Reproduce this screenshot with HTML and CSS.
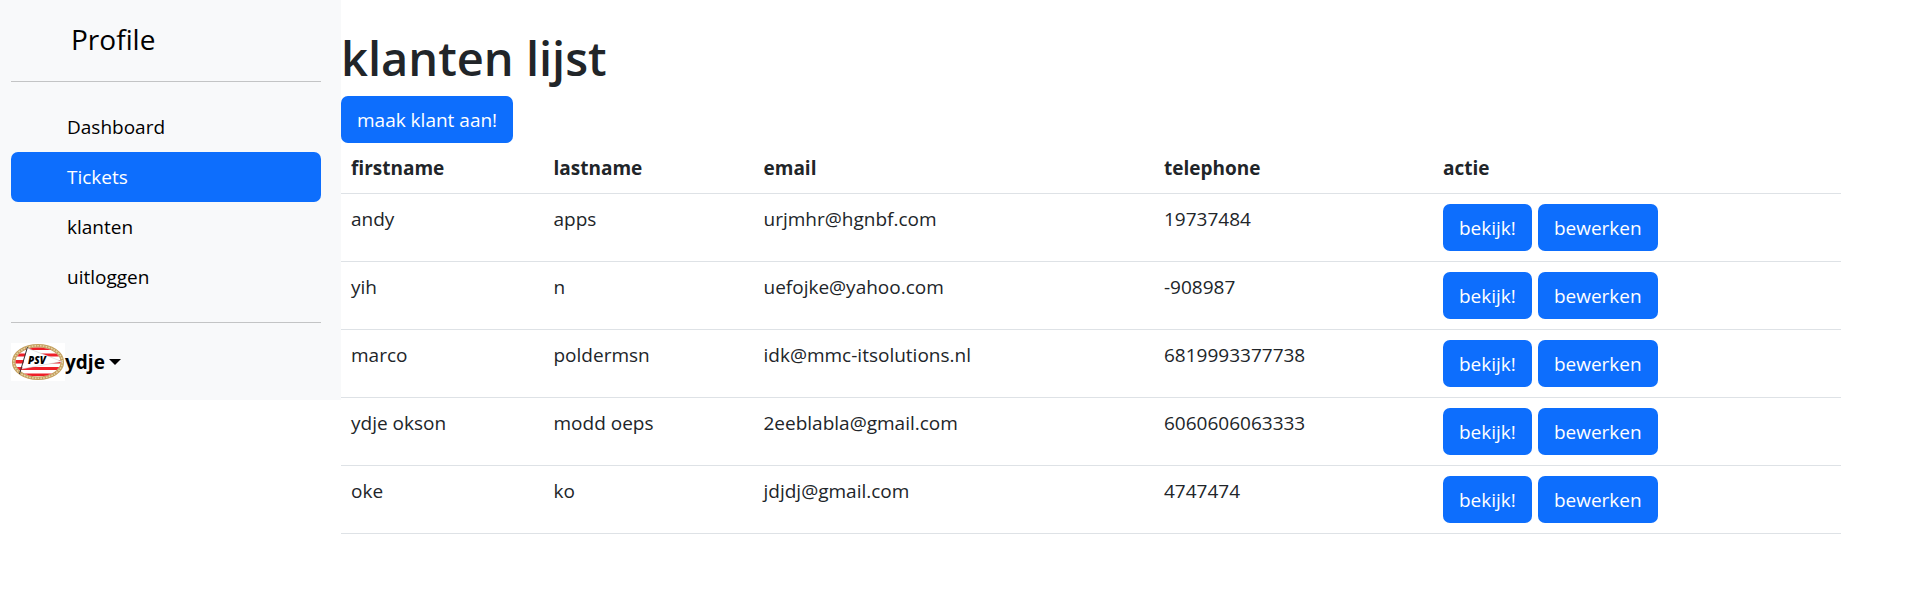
FILE: index.html
```html
<!DOCTYPE html>
<html lang="nl">
<head>
<meta charset="utf-8">
<meta name="viewport" content="width=device-width, initial-scale=1">
<title>klanten lijst</title>
<link rel="stylesheet" href="styles.css">
</head>
<body>
<div class="layout">
  <aside class="sidebar">
    <a class="brand" href="#">Profile</a>
    <hr class="divider">
    <nav>
      <ul class="nav">
        <li><a class="nav-link" href="#">Dashboard</a></li>
        <li><a class="nav-link active" href="#" aria-current="page">Tickets</a></li>
        <li><a class="nav-link" href="#">klanten</a></li>
        <li><a class="nav-link" href="#">uitloggen</a></li>
      </ul>
    </nav>
    <hr class="divider">
    <button class="user" type="button" aria-haspopup="true">
      <svg class="crest" width="54" height="38" viewBox="0 0 54 38" aria-hidden="true">
        <defs><clipPath id="oval"><ellipse cx="27" cy="19" rx="22.5" ry="14.5"/></clipPath></defs>
        <rect width="54" height="38" fill="#fff"/>
        <ellipse cx="27" cy="19" rx="24.3" ry="16.3" fill="#fff" stroke="#c4a060" stroke-width="3.6"/>
        <ellipse cx="27" cy="19" rx="24.3" ry="16.3" fill="none" stroke="#e6d3a4" stroke-width="1.6" stroke-dasharray="1.6 1.2"/>
        <g clip-path="url(#oval)">
          <path d="M0 4h54v3H0zM0 10.500h54v3H0zM0 17h54v3.500H0zM0 24h54v3H0zM0 30.500h54v2.500H0z" fill="#ee2029"/>
        </g>
        <path d="M16 5 51 18.500 11 26z" fill="#fff"/>
        <path d="M16.500 4 8.500 31" stroke="#333" stroke-width="1"/>
        <path d="M16 5 51 18.500 11 26" fill="none" stroke="#bbb" stroke-width=".4"/>
        <text class="crest-text" x="17" y="21">PSV</text>
      </svg>
      <span>ydje</span>
      <span class="caret"></span>
    </button>
  </aside>
  <main class="content">
    <h1>klanten lijst</h1>
    <a class="btn" href="#">maak klant aan!</a>
    <table class="table">
      <colgroup><col class="col-first"><col class="col-last"><col class="col-email"><col class="col-phone"><col></colgroup>
      <thead>
        <tr><th scope="col">firstname</th><th scope="col">lastname</th><th scope="col">email</th><th scope="col">telephone</th><th scope="col">actie</th></tr>
      </thead>
      <tbody>
        <tr><td>andy</td><td>apps</td><td>urjmhr@hgnbf.com</td><td>19737484</td><td><div class="actions"><a class="btn" href="#">bekijk!</a><a class="btn" href="#">bewerken</a></div></td></tr>
        <tr><td>yih</td><td>n</td><td>uefojke@yahoo.com</td><td>-908987</td><td><div class="actions"><a class="btn" href="#">bekijk!</a><a class="btn" href="#">bewerken</a></div></td></tr>
        <tr><td>marco</td><td>poldermsn</td><td>idk@mmc-itsolutions.nl</td><td>6819993377738</td><td><div class="actions"><a class="btn" href="#">bekijk!</a><a class="btn" href="#">bewerken</a></div></td></tr>
        <tr><td>ydje okson</td><td>modd oeps</td><td>2eeblabla@gmail.com</td><td>6060606063333</td><td><div class="actions"><a class="btn" href="#">bekijk!</a><a class="btn" href="#">bewerken</a></div></td></tr>
        <tr><td>oke</td><td>ko</td><td>jdjdj@gmail.com</td><td>4747474</td><td><div class="actions"><a class="btn" href="#">bekijk!</a><a class="btn" href="#">bewerken</a></div></td></tr>
      </tbody>
    </table>
  </main>
</div>
</body>
</html>
```

FILE: styles.css
```css
* {
  box-sizing: border-box;
}

body {
  margin: 0;
  background: #fff;
  color: #212529;
  font-family: "Segoe UI", "Open Sans", "Noto Sans", sans-serif;
  font-size: 19px;
  line-height: 30px;
}

a {
  text-decoration: none;
}

.layout {
  display: flex;
  align-items: flex-start;
}

.sidebar {
  flex: 0 0 341px;
  padding: 19px 20px 19px 11px;
  background: #f8f9fa;
  color: #000;
}

.brand {
  display: block;
  padding: 0 0 2px 60px;
  color: #000;
  font-size: 28px;
  line-height: 40px;
}

.divider {
  height: 1px;
  margin: 20px 0;
  border: 0;
  background: #c3c4c5;
}

.nav {
  margin: 0;
  padding: 0;
  list-style: none;
}

.nav-link {
  display: block;
  padding: 10px 20px 10px 56px;
  border-radius: 7px;
  color: #000;
}

.nav-link.active {
  background: #0d6efd;
  color: #fff;
}

.user {
  display: flex;
  align-items: center;
  padding: 0;
  border: 0;
  background: none;
  color: #000;
  font: inherit;
  font-weight: 700;
}

.crest {
  display: block;
}

.crest-text {
  font: italic 800 10px "Open Sans", sans-serif;
  fill: #000;
}

.caret {
  margin-left: 4px;
  border-top: 6px solid #000;
  border-right: 6px solid transparent;
  border-left: 6px solid transparent;
}

.content {
  flex: 1;
  min-width: 0;
  padding: 28px 65px 26px 0;
}

h1 {
  margin: 0 0 8px;
  font-size: 47px;
  font-weight: 600;
  line-height: 60px;
}

.btn {
  display: inline-block;
  padding: 9px 16px 8px;
  border-radius: 7px;
  background: #0d6efd;
  color: #fff;
  vertical-align: top;
}

.table {
  width: 100%;
  border-spacing: 0;
  table-layout: fixed;
}

.col-first {
  width: 13.5%;
}

.col-last {
  width: 14%;
}

.col-email {
  width: 26.7%;
}

.col-phone {
  width: 18.6%;
}

th,
td {
  padding: 10px;
  border-bottom: 1px solid #dee2e6;
  text-align: left;
  vertical-align: top;
}

th {
  font-weight: 700;
}

.actions {
  display: flex;
  gap: 6px;
}
```
